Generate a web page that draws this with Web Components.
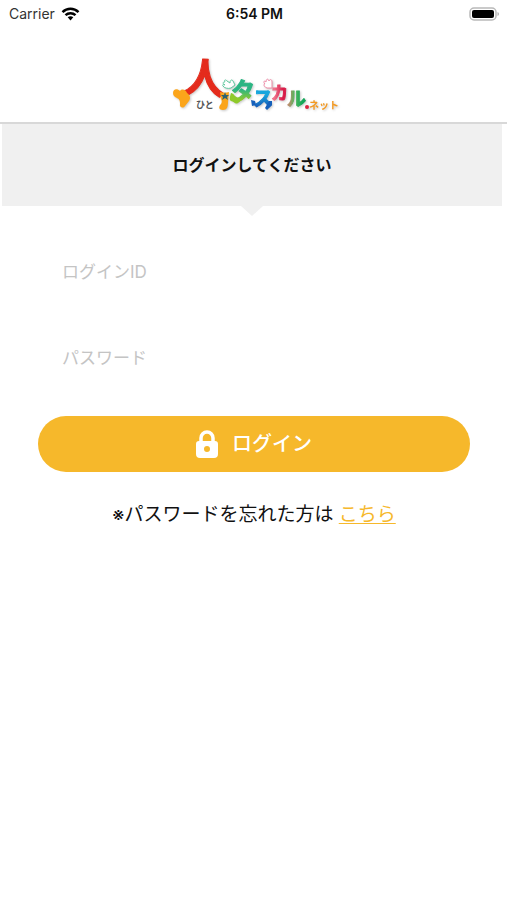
<!DOCTYPE html>
<html lang="ja">
<head>
<meta charset="utf-8">
<meta name="viewport" content="width=device-width, initial-scale=1">
<title>ログイン</title>
<style>
  body {
    margin: 0; background: #fff; color: #111;
    font-family: Inter, "Noto Sans CJK JP", sans-serif;
  }
</style>
</head>
<body>
<login-app></login-app>

<script>
/** <status-bar> — carrier, clock and battery strip. */
class StatusBar extends HTMLElement {
  constructor() {
    super();
    this.attachShadow({ mode: 'open' });
  }

  connectedCallback() {
    this.shadowRoot.innerHTML = `
      <style>
        :host {
          display: grid; grid-template-columns: 1fr auto 1fr; align-items: center;
          height: 28px; padding: 0 7px 0 9px; font-size: 14px; line-height: 20px;
        }
        .carrier { display: flex; align-items: center; gap: 6px; color: #333; }
        .time { font-weight: 600; }
        .battery { justify-self: end; }
        svg { display: block; }
      </style>
      <div class="carrier">
        <slot name="carrier"></slot>
        <svg width="19" height="14" viewBox="0 0 18 14" fill="none" stroke="#000" stroke-width="2.5" aria-hidden="true">
          <path d="M1 5.2C5.6 .7 12.4 .7 17 5.2"/>
          <path d="M4 8.2C6.800 5.500 11.200 5.500 14 8.200"/>
          <path d="M6.200 10.200C7.800 8.800 10.200 8.800 11.800 10.200L9 13.400Z" fill="#000" stroke="none"/>
        </svg>
      </div>
      <span class="time"><slot name="time"></slot></span>
      <svg class="battery" width="31" height="14" viewBox="0 0 31 14" aria-hidden="true">
        <rect x="1" y="1" width="26" height="12" rx="4" fill="#fff" stroke="#b9b9b9" stroke-width="1.5"/>
        <rect x="3" y="3" width="22" height="8" rx="2" fill="#000"/>
        <path d="M28.500 5v4c2-.8 2-3.200 0-4z" fill="#b0b0b0"/>
      </svg>`;
  }
}

/** <site-logo> — the colourful wordmark with its shoes and hands. */
class SiteLogo extends HTMLElement {
  constructor() {
    super();
    this.attachShadow({ mode: 'open' });
  }

  connectedCallback() {
    this.shadowRoot.innerHTML = `
      <style>
        :host { display: block; }
        svg {
          display: block; overflow: visible;
          font-family: "Noto Sans CJK JP", sans-serif; font-weight: 700;
          stroke-linejoin: round;
        }
        .art { filter: drop-shadow(1px 1px 1px #c8c8c8); }
      </style>
      <svg width="180" height="76" viewBox="-1 -6 180 76" role="img" aria-label="人タスカル.ネット">
        <defs>
          <linearGradient id="ta" x1="0" y1="0" x2="0" y2="1">
            <stop offset=".5" stop-color="#2bb583"/><stop offset=".8" stop-color="#8fca2b"/>
          </linearGradient>
          <linearGradient id="su" x1="0" y1="0" x2="0" y2="1">
            <stop offset=".4" stop-color="#18a6dd"/><stop offset=".8" stop-color="#1560bb"/>
          </linearGradient>
          <linearGradient id="ka" x1="0" y1="0" x2="1" y2="0">
            <stop offset=".2" stop-color="#f0708a"/><stop offset=".7" stop-color="#d81d49"/>
          </linearGradient>
          <linearGradient id="ru" x1="0" y1="0" x2="1" y2="0">
            <stop offset=".1" stop-color="#b88c6b"/><stop offset=".4" stop-color="#4fb85b"/><stop offset=".8" stop-color="#16a65a"/>
          </linearGradient>
        </defs>
        <g class="art">
          <text x="19" y="43" font-size="41" fill="#e42b1c" stroke="#e42b1c" transform="rotate(4 40 30)">人</text>
          <path d="M8 43c0-4 4-5 7-2 2-3 6-1 7 2 3 2 4 5 2 8l-4 5c-2 3-6 1-5-2 0-4-1-5-3-6-2-1-4-2-4-5z" fill="#fba51b"/>
          <path d="M55 42c3 1 6 1 9 0l-1 10c0 5-1 8-5 8-4 0-5-3-2-6 1-2 1-3 0-5z" fill="#fba51b"/>
          <path d="M60 42l1 3 3 0-2 2 1 3-3-2-3 2 1-3-2-2h3z" fill="#2d6270"/>
          <path d="M70 35l-4 3c-3 1-7 0-8-2-1-1 0-2 2-1-3-2-2-3 0-3-1-2 0-3 2-1l3 2c0-3 2-4 3-2z" fill="#fff" stroke="#5fc9a0"/>
          <text x="66" y="50" font-size="24" fill="url(#ta)" stroke="url(#ta)">タ</text>
          <path d="M66 43c3 0 3 4 8 5 2 1 1 4-1 5-3 2-4-2-7-2-2-1-1-5 0-8z" fill="#8fca2b"/>
          <text x="88" y="56" font-size="20" fill="url(#su)" stroke="url(#su)">ス</text>
          <path d="M86 50l4 1 1 4-4 1zM104 51l3 0 0 4-5 5-2-2z" fill="#1560bb"/>
          <path d="M107 38h-5c-3-1-4-4-2-4-2-2-1-4 1-2 0-3 2-4 3-1 1-2 3-2 3 1z" fill="#fff" stroke="#ef8ba6"/>
          <text x="106" y="49" font-size="17" fill="url(#ka)" stroke="url(#ka)">カ</text>
          <text x="122" y="56" font-size="19" fill="url(#ru)" stroke="url(#ru)">ル</text>
          <circle cx="142" cy="57" r="2" fill="#dc2342"/>
          <text x="144" y="59" font-size="10" fill="#f49a22">ネット</text>
        </g>
        <text x="31" y="58" font-size="9" fill="#555">ひと</text>
      </svg>`;
  }
}

/** <notice-panel> — grey message block with a pointer underneath. */
class NoticePanel extends HTMLElement {
  constructor() {
    super();
    this.attachShadow({ mode: 'open' });
  }

  connectedCallback() {
    this.shadowRoot.innerHTML = `
      <style>
        :host { display: block; position: relative; margin: 0 5px 0 2px; background: #f0f0f0; }
        h1 {
          margin: 0; padding: 29px 0; text-align: center;
          font-size: 16px; line-height: 24px; font-weight: 700;
        }
        :host::after {
          content: ''; position: absolute; top: 100%; left: 50%; margin-left: -11px;
          border: 11px solid transparent; border-top: 10px solid #f0f0f0; border-bottom: 0;
        }
      </style>
      <h1><slot></slot></h1>`;
  }
}

/** <login-form> — ID and password fields, submit button, reminder link. */
class LoginForm extends HTMLElement {
  constructor() {
    super();
    this.attachShadow({ mode: 'open' });
  }

  connectedCallback() {
    this.shadowRoot.innerHTML = `
      <style>
        :host { display: block; padding: 38px 37px 30px 38px; }
        form { display: grid; gap: 30px; }
        input, button {
          box-sizing: border-box; width: 100%; height: 56px; margin: 0;
          border: 0; border-radius: 28px; font-family: inherit;
        }
        input { padding: 0 24px; background: #fff; color: #111; font-size: 17px; outline: none; }
        input::placeholder { color: #c4c4c4; opacity: 1; }
        button {
          display: flex; align-items: center; justify-content: center; gap: 14px;
          background: #f6b82b; color: #fff; font-size: 20px; line-height: 28px;
          font-weight: 500; cursor: pointer;
        }
        p { margin: 0; text-align: center; font-size: 19px; line-height: 26px; }
        a { color: #f6b82b; text-decoration: underline; text-underline-offset: 2px; }
      </style>
      <form>
        <input type="text" name="id" aria-label="ログインID" placeholder="ログインID">
        <input type="password" name="password" aria-label="パスワード" placeholder="パスワード">
        <button type="submit">
          <svg width="22" height="28" viewBox="0 0 22 28" aria-hidden="true">
            <path d="M5 14V8a6 6 0 0 1 12 0v6" fill="none" stroke="#fff" stroke-width="3.5"/>
            <path fill="#fff" fill-rule="evenodd" d="M3 11h16q3 0 3 3v10q0 4-4 4H4q-4 0-4-4V14q0-3 3-3zM11 16a3 3 0 1 0 0 6 3 3 0 0 0 0-6z"/>
          </svg>
          <span>ログイン</span>
        </button>
        <p>※パスワードを忘れた方は <a href="#reminder">こちら</a></p>
      </form>`;
    this.shadowRoot.querySelector('form').addEventListener('submit', (e) => e.preventDefault());
  }
}

/** <login-app> — page shell. */
class LoginApp extends HTMLElement {
  constructor() {
    super();
    this.attachShadow({ mode: 'open' });
  }

  connectedCallback() {
    this.shadowRoot.innerHTML = `
      <style>
        :host { display: block; min-height: 100vh; background: #fff; }
        header {
          display: flex; justify-content: center;
          padding: 16px 0 2px; border-bottom: 2px solid #d8d8d8;
        }
      </style>
      <status-bar>
        <span slot="carrier">Carrier</span>
        <span slot="time">6:54 PM</span>
      </status-bar>
      <header><site-logo></site-logo></header>
      <main>
        <notice-panel>ログインしてください</notice-panel>
        <login-form></login-form>
      </main>`;
  }
}

customElements.define('status-bar', StatusBar);
customElements.define('site-logo', SiteLogo);
customElements.define('notice-panel', NoticePanel);
customElements.define('login-form', LoginForm);
customElements.define('login-app', LoginApp);
</script>
</body>
</html>
